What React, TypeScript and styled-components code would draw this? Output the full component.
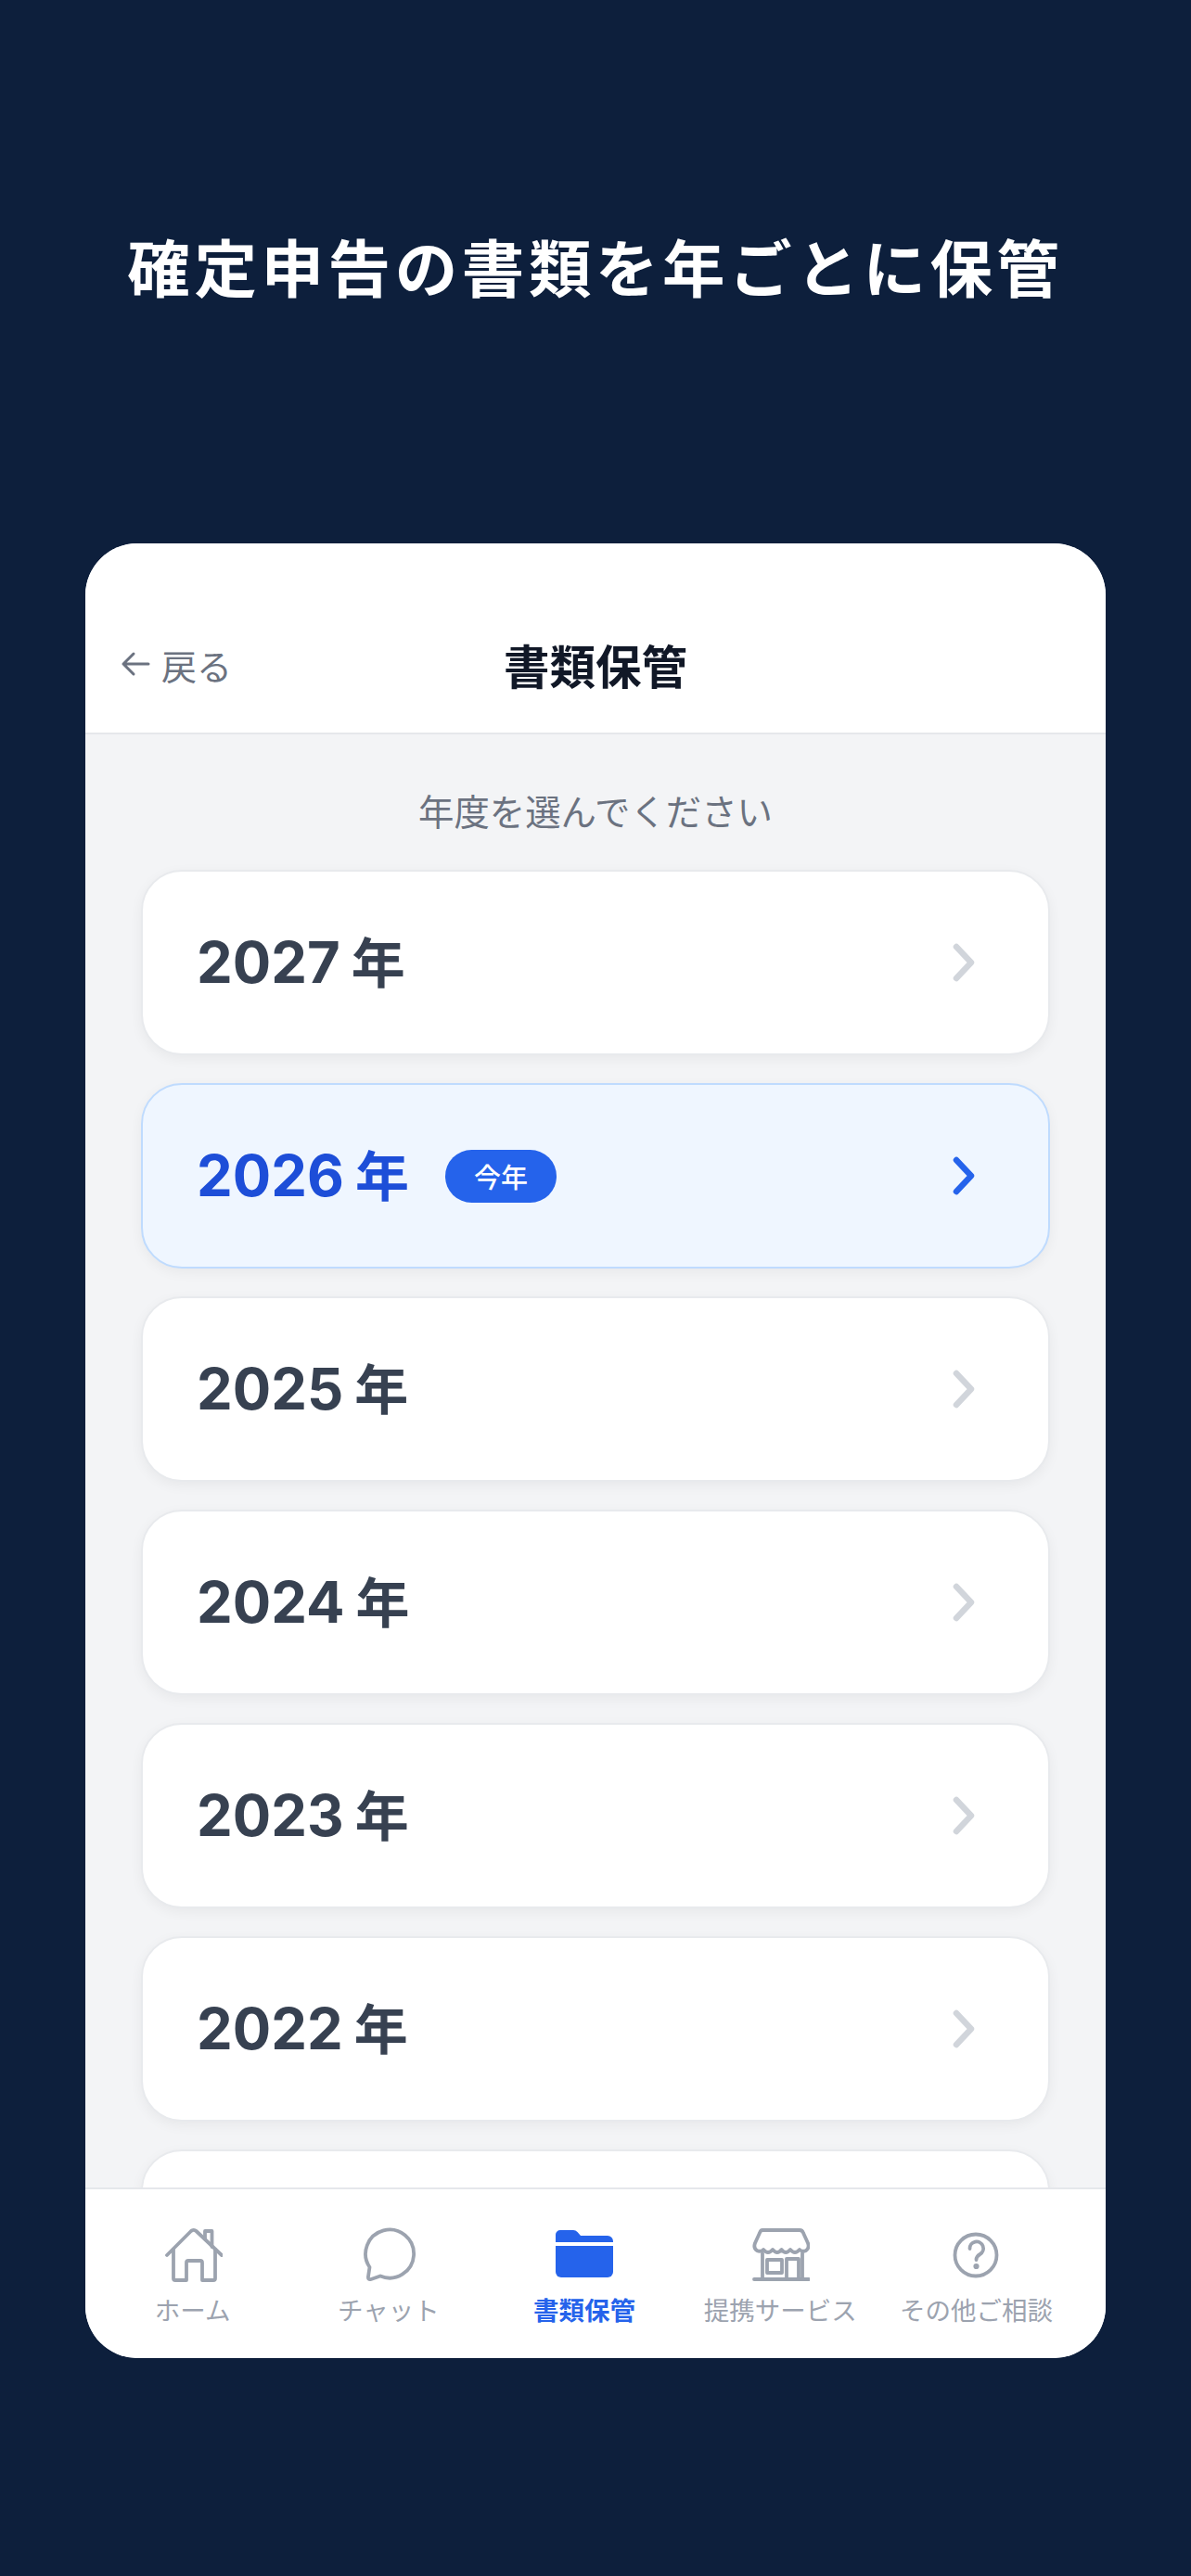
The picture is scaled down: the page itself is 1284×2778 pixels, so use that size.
import React from "react";
import styled, { createGlobalStyle } from "styled-components";

const Global = createGlobalStyle`
  html, body { margin: 0; padding: 0; background: #0d1f3c; }
  * { box-sizing: border-box; }
`;

const Page = styled.div`
  width: 1284px;
  height: 2778px;
  padding-top: 251px;
  background: #0d1f3c;
  overflow: hidden;
  font-family: Inter, "Noto Sans CJK JP", sans-serif;
`;

const Headline = styled.h1`
  margin: 0 0 255px;
  height: 80px;
  line-height: 80px;
  text-align: center;
  color: #fff;
  font-size: 67.5px;
  font-weight: 700;
  letter-spacing: 4.6px;
  white-space: nowrap;
`;

const Panel = styled.section`
  width: 1100px;
  height: 1957px;
  margin-left: 92px;
  border-radius: 56px;
  background: #f3f4f6;
  overflow: hidden;
  display: flex;
  flex-direction: column;
`;

const Header = styled.header`
  flex: none;
  height: 206px;
  padding: 56px 38px 0;
  display: grid;
  grid-template-columns: 1fr auto 1fr;
  align-items: center;
  background: #fff;
  border-bottom: 2px solid #e5e7eb;
`;

const BackLink = styled.div`
  display: flex;
  align-items: center;
  gap: 12px;
  color: #6b7280;
  font-size: 38px;
`;

const Title = styled.div`
  color: #111827;
  font-size: 49.5px;
  font-weight: 700;
`;

const Body = styled.main`
  flex: 1;
  min-height: 0;
  overflow: hidden;
  padding: 53px 60px 0;
`;

const Hint = styled.p`
  margin: 0 0 31px;
  height: 62px;
  line-height: 62px;
  text-align: center;
  color: #6b7280;
  font-size: 38.4px;
`;

const YearList = styled.div`
  display: flex;
  flex-direction: column;
  gap: 30px;
`;

const YearCard = styled.div<{ $current?: boolean }>`
  flex: none;
  height: 200px;
  padding: 0 76px 0 58px;
  display: flex;
  align-items: center;
  border-radius: 44px;
  background: ${(p) => (p.$current ? "#eff6ff" : "#fff")};
  border: 2px solid ${(p) => (p.$current ? "#bfdbfe" : "#e8eaed")};
  box-shadow: 0 4px 14px rgba(0, 0, 0, 0.05);
`;

const YearLabel = styled.span<{ $current?: boolean }>`
  color: ${(p) => (p.$current ? "#1d4ed8" : "#374151")};
  font-size: 61.5px;
  font-weight: 750;
  line-height: 1;
`;

const YearSuffix = styled.span`
  margin-left: 12px;
  font-size: 58px;
  font-weight: 700;
`;

const Badge = styled.span`
  margin-left: 39px;
  width: 120px;
  height: 57px;
  border-radius: 29px;
  background: #2563eb;
  color: #fff;
  font-size: 29px;
  font-weight: 500;
  display: flex;
  align-items: center;
  justify-content: center;
`;

const Chevron = styled.svg<{ $current?: boolean }>`
  margin-left: auto;
  width: 30px;
  height: 46px;
  fill: none;
  stroke: ${(p) => (p.$current ? "#2563eb" : "#d1d5db")};
  stroke-width: 6.5;
  stroke-linecap: round;
  stroke-linejoin: round;
`;

const TabBar = styled.nav`
  flex: none;
  height: 184px;
  padding: 0 34px 0 10px;
  display: grid;
  grid-template-columns: repeat(5, 1fr);
  background: #fff;
  border-top: 2px solid #e5e7eb;
`;

const Tab = styled.div<{ $active?: boolean }>`
  padding-top: 40px;
  display: flex;
  flex-direction: column;
  align-items: center;
  color: ${(p) => (p.$active ? "#2563eb" : "#9ca3af")};
  font-size: 27.5px;
  font-weight: ${(p) => (p.$active ? 700 : 400)};
  white-space: nowrap;
`;

const TabIcon = styled.svg`
  width: 64px;
  height: 60px;
  margin-bottom: 9px;
  fill: none;
  stroke: #9ca3af;
  stroke-width: 3.8;
  stroke-linecap: round;
  stroke-linejoin: round;
`;

const years = [2027, 2026, 2025, 2024, 2023, 2022, 2021];

const tabs: { label: string; active?: boolean; icon: React.ReactNode }[] = [
  {
    label: "ホーム",
    icon: (
      <>
        <path d="M4 31 L30 5 a4 4 0 0 1 5.500 0 L63 31" />
        <path d="M45 13 V5 h7.500 V22" />
        <path d="M11 25 V56 a2 2 0 0 0 2 2 H25 V39 a2 2 0 0 1 2 -2 H40 a2 2 0 0 1 2 2 V58 H54 a2 2 0 0 0 2 -2 V25" />
      </>
    ),
  },
  {
    label: "チャット",
    icon: (
      <path d="M11.500 44 A26 26 0 1 1 23 53.500 L13 57 Q9.500 58 10 54 Z" />
    ),
  },
  {
    label: "書類保管",
    active: true,
    icon: (
      <g fill="#2563eb" stroke="none">
        <path d="M1 14 V9 a5 5 0 0 1 5 -5 H20 a6 6 0 0 1 4.500 2 L28 10 H57 a6 6 0 0 1 6 6 V17 H1 Z" />
        <path d="M1 21 H63 V49 a6 6 0 0 1 -6 6 H7 a6 6 0 0 1 -6 -6 Z" />
      </g>
    ),
  },
  {
    label: "提携サービス",
    icon: (
      <>
        <path d="M13 4 H53 Q56 4 57 7 L62 18 Q64 23 60 26 Q56 28 53 25 Q48 31 43 25 Q38 31 33.500 25 Q29 31 24 25 Q19 31 14 25 Q11 28 7 26 Q3 23 5 18 L10 7 Q11 4 13 4 Z" />
        <path d="M13 29 V57 M56 29 V57 M4 57 H63" />
        <path d="M18 36 H34 V50 H18 Z" />
        <path d="M39 57 V35 H52 V57" />
      </>
    ),
  },
  {
    label: "その他ご相談",
    icon: (
      <>
        <circle cx="32" cy="31" r="22.500" />
        <path d="M25.500 24 a7.300 7.300 0 1 1 11 6 C34 31.500 32.500 33 32.500 36" />
        <circle cx="32.500" cy="43" r="1.200" fill="#9ca3af" />
      </>
    ),
  },
];

export default function App() {
  return (
    <Page>
      <Global />
      <Headline>確定申告の書類を年ごとに保管</Headline>
      <Panel>
        <Header>
          <BackLink>
            <svg width="32" height="28" viewBox="0 0 32 28" fill="none" stroke="#6b7280" strokeWidth="3" strokeLinecap="round" strokeLinejoin="round">
              <path d="M30 14 H3 M14 3 L3 14 L14 25" />
            </svg>
            戻る
          </BackLink>
          <Title>書類保管</Title>
          <span />
        </Header>
        <Body>
          <Hint>年度を選んでください</Hint>
          <YearList>
            {years.map((y) => {
              const current = y === 2026;
              return (
                <YearCard key={y} $current={current}>
                  <YearLabel $current={current}>
                    {y}
                    <YearSuffix>年</YearSuffix>
                  </YearLabel>
                  {current && <Badge>今年</Badge>}
                  <Chevron $current={current} viewBox="0 0 30 46">
                    <path d="M7 6 L23 23 L7 40" />
                  </Chevron>
                </YearCard>
              );
            })}
          </YearList>
        </Body>
        <TabBar>
          {tabs.map((t) => (
            <Tab key={t.label} $active={t.active}>
              <TabIcon viewBox="0 0 64 60">{t.icon}</TabIcon>
              {t.label}
            </Tab>
          ))}
        </TabBar>
      </Panel>
    </Page>
  );
}
